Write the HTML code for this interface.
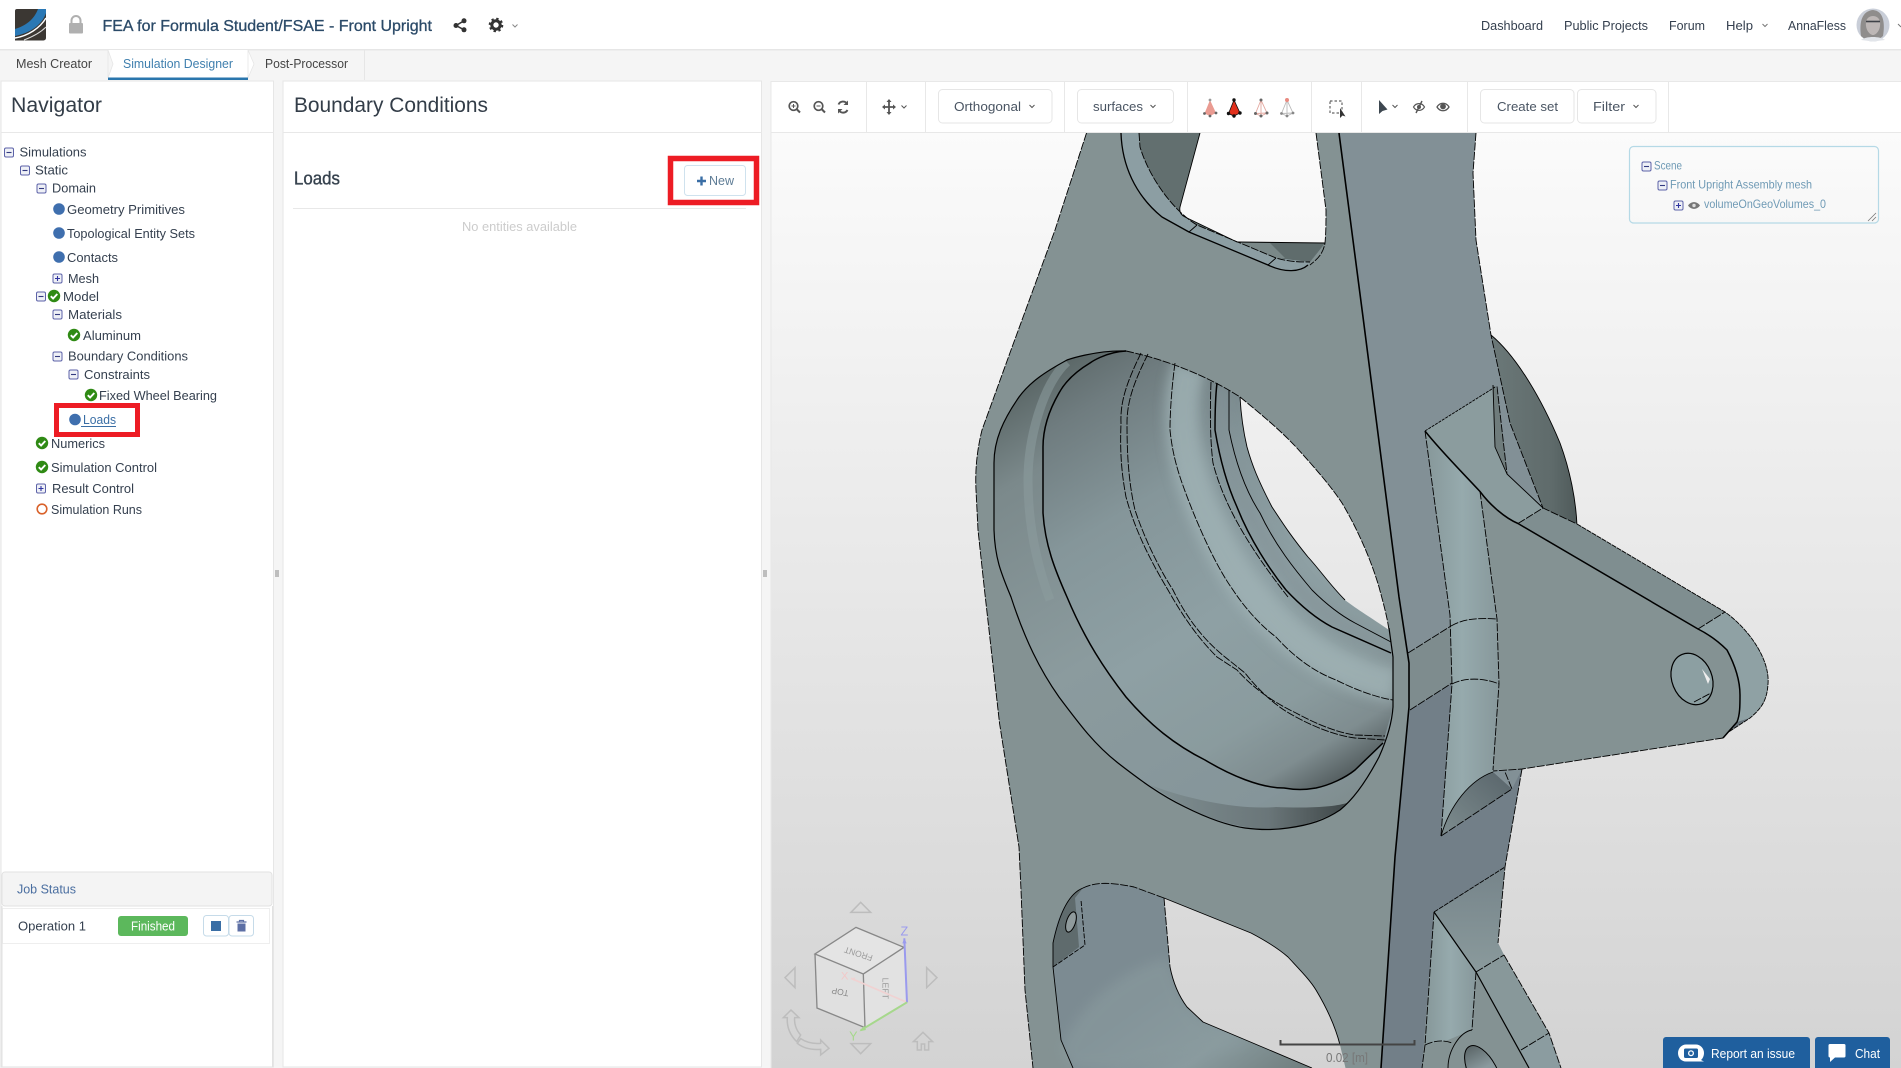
<!DOCTYPE html>
<html lang="en">
<head>
<meta charset="utf-8">
<title>FEA for Formula Student/FSAE - Front Upright</title>
<style>
html,body{margin:0;padding:0;background:#f5f5f5;width:1901px;height:1068px;overflow:hidden}
svg{display:block}
text{font-family:"Liberation Sans",sans-serif;font-size:13px;fill:#35404f}
.m{fill:none;stroke:#000;stroke-width:.9;stroke-linejoin:round}
.d{stroke-dasharray:8 1.5}
.t{stroke-width:1.5}
.ic{fill:none;stroke:#555;stroke-width:1.4}
.sep{stroke:#e8e8e8;stroke-width:1}
.btn{fill:#fff;stroke:#e6e6e6;stroke-width:1}
</style>
</head>
<body>
<svg width="1901" height="1068" viewBox="0 0 1901 1068" xmlns="http://www.w3.org/2000/svg">
<defs>
<linearGradient id="bg" gradientUnits="userSpaceOnUse" x1="0" y1="133" x2="0" y2="1068"><stop offset="0" stop-color="#fbfbfb"/><stop offset="1" stop-color="#d3d3d3"/></linearGradient>
<linearGradient id="rim" gradientUnits="userSpaceOnUse" x1="1060" y1="360" x2="1340" y2="830"><stop offset="0" stop-color="#5a6666"/><stop offset=".15" stop-color="#7b898b"/><stop offset=".5" stop-color="#8b9b9e"/><stop offset=".88" stop-color="#85959a"/><stop offset="1" stop-color="#7d8a8a"/></linearGradient>
<linearGradient id="cres" gradientUnits="userSpaceOnUse" x1="1150" y1="0" x2="1347" y2="0"><stop offset="0" stop-color="#7f8e91"/><stop offset=".6" stop-color="#6a7679"/><stop offset="1" stop-color="#3f4748"/></linearGradient>
<linearGradient id="inn" gradientUnits="userSpaceOnUse" x1="1060" y1="360" x2="1340" y2="830"><stop offset="0" stop-color="#5e6a6b"/><stop offset=".1" stop-color="#6f7c7f"/><stop offset=".3" stop-color="#85969a"/><stop offset=".55" stop-color="#8ea0a4"/><stop offset=".75" stop-color="#8a9b9e"/><stop offset=".85" stop-color="#7f8d90"/><stop offset=".92" stop-color="#566062"/><stop offset="1" stop-color="#2a2f30"/></linearGradient>
<linearGradient id="disk" x1="0" y1="0" x2="1" y2="0"><stop offset="0" stop-color="#6b7878"/><stop offset=".7" stop-color="#5f6b6b"/><stop offset="1" stop-color="#4f5a5a"/></linearGradient>
<linearGradient id="rib" x1="0" y1="0" x2="1" y2="0"><stop offset="0" stop-color="#869799"/><stop offset=".5" stop-color="#96aaad"/><stop offset="1" stop-color="#87989b"/></linearGradient>
<linearGradient id="leaf" x1="0" y1="1" x2="1" y2="0"><stop offset="0" stop-color="#7e8d8f"/><stop offset="1" stop-color="#58646a"/></linearGradient>
<linearGradient id="low" x1="0" y1="0" x2="1" y2="1"><stop offset="0" stop-color="#7c8b92"/><stop offset=".5" stop-color="#7c8b92"/><stop offset=".75" stop-color="#8a9b9f"/><stop offset="1" stop-color="#6f7d7d"/></linearGradient>
<linearGradient id="hol" x1="0" y1="0" x2="0" y2="1"><stop offset="0" stop-color="#5b6668"/><stop offset=".45" stop-color="#8a9a9e"/><stop offset="1" stop-color="#8f9fa3"/></linearGradient>
<linearGradient id="lrib" x1="0" y1="0" x2="0" y2="1"><stop offset="0" stop-color="#76848a"/><stop offset="1" stop-color="#8a9a9c"/></linearGradient>
<filter id="bl" x="-20%" y="-20%" width="140%" height="140%"><feGaussianBlur stdDeviation="6"/></filter>
<clipPath id="vp"><rect x="771" y="133" width="1130" height="935"/></clipPath>
<clipPath id="cinner"><path d="M1126 351 C1105 352 1090 363 1090 363 C1075 372 1065 382 1059 393 C1048 412 1043 430 1043 447 L1043 513 C1045 545 1055 570 1067 597 C1085 640 1105 670 1126 697 C1150 725 1175 745 1205 760 C1230 775 1260 788 1284 788 C1295 790 1305 790 1316 788 C1330 785 1345 778 1355 770 L1383 743 L1393 707 L1393 657 L1389 628 L1240 397 C1217 382 1177 362 1126 351 Z"/></clipPath>
<symbol id="mi" viewBox="0 0 11 11"><rect x="1" y="1" width="9" height="9" rx="1.5" fill="#eef0f6" stroke="#5c62a8"/><path d="M3 5.5H8" stroke="#333a80" stroke-width="1.1"/></symbol>
<symbol id="pl" viewBox="0 0 11 11"><rect x="1" y="1" width="9" height="9" rx="1.5" fill="#eef0f6" stroke="#5c62a8"/><path d="M3 5.5H8M5.5 3V8" stroke="#2f34a0" stroke-width="1.1"/></symbol>
<symbol id="ok" viewBox="0 0 14 14"><circle cx="7" cy="7" r="6.2" fill="#2f8a14"/><path d="M3.8 7.2L6.1 9.5L10.3 5" fill="none" stroke="#fff" stroke-width="1.9"/></symbol>
</defs>

<!-- page background -->
<rect width="1901" height="1068" fill="#f5f5f5"/>

<!-- header -->
<rect width="1901" height="49" fill="#fff"/>
<rect y="49" width="1901" height="1.5" fill="#e6e6e6"/>
<path d="M17 9H46V38a2.5 2.5 0 0 1-2.5 2.5H15V11a2 2 0 0 1 2-2Z" fill="#3b3733"/>
<path d="M38 9C34 20 25 26 15 29V36C30 33 42 25 46 13V9Z" fill="#2a78b5"/>
<path d="M46 18C40 28 28 36 15 38" fill="none" stroke="#fff" stroke-width="1.4"/>
<path d="M46 27C40 33 32 37 24 40" fill="none" stroke="#ddd" stroke-width="1"/>
<rect x="69" y="23" width="14" height="10.5" rx="1" fill="#b0b0b0"/>
<path d="M71.5 23V20.5a4.5 4.5 0 0 1 9 0V23" fill="none" stroke="#b0b0b0" stroke-width="2"/>
<text x="102.500" y="31" textLength="329.500" lengthAdjust="spacingAndGlyphs" style="font-size:16px;fill:#2b4a68;stroke:#2b4a68;stroke-width:.3">FEA for Formula Student/FSAE - Front Upright</text>
<circle cx="456" cy="25.500" r="2.500" fill="#333"/><circle cx="464" cy="20.800" r="2.500" fill="#333"/><circle cx="464" cy="29.800" r="2.500" fill="#333"/>
<path d="M456 25.500L464 20.800M456 25.500L464 29.800" stroke="#333" stroke-width="1.500"/>
<circle cx="496" cy="25" r="4.200" fill="none" stroke="#333" stroke-width="3"/>
<circle cx="496" cy="25" r="6.300" fill="none" stroke="#333" stroke-width="2" stroke-dasharray="2.400 2.550"/>
<path d="M512.500 24.500L515 27L517.500 24.500" fill="none" stroke="#888" stroke-width="1"/>

<text x="1481" y="30" textLength="62" lengthAdjust="spacingAndGlyphs">Dashboard</text>
<text x="1564" y="30" textLength="84" lengthAdjust="spacingAndGlyphs">Public Projects</text>
<text x="1669" y="30" textLength="36" lengthAdjust="spacingAndGlyphs">Forum</text>
<text x="1726" y="30" textLength="27" lengthAdjust="spacingAndGlyphs">Help</text>
<path d="M1762.500 24L1765 26.500L1767.500 24" fill="none" stroke="#777" stroke-width="1"/>
<text x="1788" y="30" textLength="58" lengthAdjust="spacingAndGlyphs">AnnaFless</text>
<circle cx="1873" cy="25" r="16.500" fill="#c9ced8"/>
<path d="M1861 36C1859 22 1862 11 1873 10C1884 11 1885 24 1883 36L1878 40H1866Z" fill="#8f8d8c"/>
<path d="M1866 22C1867 14 1879 14 1880 22C1881 30 1876 35 1873 35C1870 35 1865 30 1866 22Z" fill="#bdb7b6"/>
<path d="M1866 21.500H1880" stroke="#3f4248" stroke-width="1.600"/>
<path d="M1861 40C1866 36 1880 36 1885 40L1873 41.500Z" fill="#e2e5ea"/>
<path d="M1898 24L1901 27" stroke="#777" stroke-width="1"/>

<!-- tab bar -->
<rect y="50.500" width="1901" height="29.500" fill="#f5f5f5"/>
<rect x="364" y="50" width="1" height="30" fill="#e6e6e6"/>
<rect x="108" y="50" width="140" height="30" fill="#fff"/>
<path d="M108 50L113 64L108 78Z" fill="#f5f5f5" stroke="#e6e6e6" stroke-width=".8"/>
<path d="M248 50L254 64L248 78Z" fill="#fff" stroke="#e6e6e6" stroke-width=".8"/>
<rect x="108" y="77.500" width="140" height="2.500" fill="#2a76ad"/>
<text x="16" y="68" textLength="76" lengthAdjust="spacingAndGlyphs" style="fill:#444">Mesh Creator</text>
<text x="123" y="68" textLength="110" lengthAdjust="spacingAndGlyphs" style="fill:#3f7fae">Simulation Designer</text>
<text x="265" y="68" textLength="83" lengthAdjust="spacingAndGlyphs" style="fill:#444">Post-Processor</text>

<!-- navigator panel -->
<rect x="1" y="81" width="272.500" height="986" fill="#fff" stroke="#e6e6e6"/>
<path d="M1 132.500H273.500" stroke="#e8e8e8"/>
<text x="11" y="112" textLength="91" lengthAdjust="spacingAndGlyphs" style="font-size:21px;fill:#333d48">Navigator</text>

<use href="#mi" x="3.500" y="147" width="11" height="11"/>
<text x="19.500" y="156.500" textLength="67" lengthAdjust="spacingAndGlyphs">Simulations</text>
<use href="#mi" x="19.500" y="165" width="11" height="11"/>
<text x="35" y="174.500" textLength="33" lengthAdjust="spacingAndGlyphs">Static</text>
<use href="#mi" x="36" y="183" width="11" height="11"/>
<text x="52" y="192.500" textLength="44" lengthAdjust="spacingAndGlyphs">Domain</text>
<circle cx="59" cy="209" r="5.800" fill="#3f6fae"/>
<text x="67" y="214" textLength="118" lengthAdjust="spacingAndGlyphs">Geometry Primitives</text>
<circle cx="59" cy="233" r="5.800" fill="#3f6fae"/>
<text x="67" y="238" textLength="128" lengthAdjust="spacingAndGlyphs">Topological Entity Sets</text>
<circle cx="59" cy="257" r="5.800" fill="#3f6fae"/>
<text x="67" y="262" textLength="51" lengthAdjust="spacingAndGlyphs">Contacts</text>
<use href="#pl" x="52" y="273" width="11" height="11"/>
<text x="68" y="283" textLength="31" lengthAdjust="spacingAndGlyphs">Mesh</text>
<use href="#mi" x="35.500" y="291" width="11" height="11"/>
<use href="#ok" x="47" y="289" width="14" height="14"/>
<text x="63" y="301" textLength="36" lengthAdjust="spacingAndGlyphs">Model</text>
<use href="#mi" x="52" y="309" width="11" height="11"/>
<text x="68" y="319" textLength="54" lengthAdjust="spacingAndGlyphs">Materials</text>
<use href="#ok" x="67" y="328" width="14" height="14"/>
<text x="83" y="340" textLength="58" lengthAdjust="spacingAndGlyphs">Aluminum</text>
<use href="#mi" x="52" y="351" width="11" height="11"/>
<text x="68" y="360.500" textLength="120" lengthAdjust="spacingAndGlyphs">Boundary Conditions</text>
<use href="#mi" x="68" y="369" width="11" height="11"/>
<text x="84" y="379" textLength="66" lengthAdjust="spacingAndGlyphs">Constraints</text>
<use href="#ok" x="84" y="388" width="14" height="14"/>
<text x="99" y="400" textLength="118" lengthAdjust="spacingAndGlyphs">Fixed Wheel Bearing</text>
<circle cx="75" cy="419.500" r="5.800" fill="#3f6fae"/>
<text x="83" y="424" textLength="33" lengthAdjust="spacingAndGlyphs" style="fill:#3a6ea5">Loads</text>
<rect x="81" y="426" width="35" height="1" fill="#3a6ea5"/>
<rect x="56.500" y="405.500" width="81" height="29" fill="none" stroke="#ed1c24" stroke-width="5"/>
<use href="#ok" x="35" y="436" width="14" height="14"/>
<text x="51" y="448" textLength="54" lengthAdjust="spacingAndGlyphs">Numerics</text>
<use href="#ok" x="35" y="460" width="14" height="14"/>
<text x="51" y="472" textLength="106" lengthAdjust="spacingAndGlyphs">Simulation Control</text>
<use href="#pl" x="35.500" y="483" width="11" height="11"/>
<text x="52" y="493" textLength="82" lengthAdjust="spacingAndGlyphs">Result Control</text>
<circle cx="42" cy="509" r="4.800" fill="none" stroke="#d9622b" stroke-width="1.600"/>
<text x="51" y="514" textLength="91" lengthAdjust="spacingAndGlyphs">Simulation Runs</text>

<!-- job status -->
<rect x="2" y="872" width="270" height="34" rx="3" fill="#f4f4f4" stroke="#e2e2e2"/>
<text x="17" y="893.500" textLength="59" lengthAdjust="spacingAndGlyphs" style="fill:#4a6ea0">Job Status</text>
<rect x="2.500" y="908.500" width="267" height="35" fill="#fff" stroke="#eee"/>
<path d="M272.500 906V1067H2V906" fill="none" stroke="#e2e2e2"/>
<text x="18" y="930.500" textLength="68" lengthAdjust="spacingAndGlyphs">Operation 1</text>
<rect x="118" y="916" width="70" height="20" rx="3" fill="#5cb85c"/>
<text x="131" y="930.500" textLength="44" lengthAdjust="spacingAndGlyphs" style="fill:#fff;font-size:12.500px">Finished</text>
<rect x="203.500" y="915.500" width="25" height="20.500" rx="3" fill="#fff" stroke="#c6dbe9"/>
<rect x="229" y="915.500" width="24.500" height="20.500" rx="3" fill="#fff" stroke="#c6dbe9"/>
<rect x="211" y="921" width="10" height="10" fill="#3a6ea5"/>
<path d="M237.500 923.500H245.500V931.500H237.500Z" fill="#5d6fa5"/><path d="M236.500 922H246.500M239.500 922V920.500H243.500V922" fill="none" stroke="#5d6fa5" stroke-width="1.200"/>

<!-- boundary conditions panel -->
<rect x="283" y="81" width="478.500" height="986" fill="#fff" stroke="#e6e6e6"/>
<path d="M283 132.500H761.500" stroke="#e8e8e8"/>
<text x="294" y="112" textLength="194" lengthAdjust="spacingAndGlyphs" style="font-size:21px;fill:#333d48">Boundary Conditions</text>
<text x="294" y="184.500" textLength="46" lengthAdjust="spacingAndGlyphs" style="font-size:18px;fill:#36424e;stroke:#36424e;stroke-width:.35">Loads</text>
<path d="M293 208.500H746" stroke="#e8e8e8"/>
<text x="462" y="231" textLength="115" lengthAdjust="spacingAndGlyphs" style="fill:#ccc">No entities available</text>
<rect x="670.500" y="158.500" width="86" height="44" fill="none" stroke="#ed1c24" stroke-width="5.500"/>
<rect x="684.500" y="165.500" width="61" height="30" rx="3" fill="#fff" stroke="#cfe2ee"/>
<path d="M697 181H706M701.500 176.500V185.500" stroke="#3a6ea5" stroke-width="2.400"/>
<text x="709" y="185" textLength="25" lengthAdjust="spacingAndGlyphs" style="fill:#5e7c95">New</text>

<!-- splitter handles -->
<path d="M276 570V577M278 570V577M764 570V577M766 570V577" stroke="#888" stroke-width="1"/>

<!-- toolbar -->
<rect x="771" y="81" width="1130" height="52" fill="#fff"/>
<path d="M771 81.500H1901M771 132.500H1901M771 81V1068" stroke="#e8e8e8"/>
<path class="sep" d="M866.500 82V132M925.500 82V132M1064.500 82V132M1187.500 82V132M1311.500 82V132M1361.500 82V132M1467.500 82V132M1668.500 82V132"/>
<circle cx="793.500" cy="106" r="4.300" class="ic" style="stroke-width:1.700"/><path d="M796.500 109L800 112.500" class="ic" style="stroke-width:2"/><path d="M791.500 106H795.500M793.500 104V108" class="ic" style="stroke-width:1"/>
<circle cx="818.500" cy="106" r="4.300" class="ic" style="stroke-width:1.700"/><path d="M821.500 109L825 112.500" class="ic" style="stroke-width:2"/><path d="M816.500 106H820.500" class="ic" style="stroke-width:1"/>
<path d="M838.500 104.500A5 5 0 0 1 847 103.500M847.500 110A5 5 0 0 1 839 110.500" class="ic" style="stroke-width:1.900"/><path d="M848 100.500V105H843.500ZM838 113.500V109H842.500Z" fill="#555"/>
<path d="M889 100V114M883 107H895" class="ic" style="stroke-width:1.800"/><path d="M889 99L886.500 102H891.500ZM889 115L886.500 112H891.500ZM882 107L885 104.500V109.500ZM896 107L893 104.500V109.500Z" fill="#555"/>
<path d="M901.500 105.500L904 108L906.500 105.500" class="ic" style="stroke-width:1"/>
<rect x="938.500" y="89.500" width="113.500" height="33.500" rx="4" class="btn"/>
<text x="954" y="111" textLength="67" lengthAdjust="spacingAndGlyphs" style="fill:#4a5563">Orthogonal</text>
<path d="M1029.500 105L1032 107.500L1034.500 105" class="ic" style="stroke-width:1"/>
<rect x="1077.500" y="89.500" width="96" height="33.500" rx="4" class="btn"/>
<text x="1093" y="111" textLength="50" lengthAdjust="spacingAndGlyphs" style="fill:#4a5563">surfaces</text>
<path d="M1150.500 105L1153 107.500L1155.500 105" class="ic" style="stroke-width:1"/>
<!-- view mode cones -->
<path d="M1210 100L1204.500 113.500L1210 116L1216 113Z" fill="#ea9b92"/><circle cx="1204.500" cy="113.500" r="1.400" fill="#666"/><circle cx="1216" cy="113" r="1.400" fill="#666"/><circle cx="1210" cy="116" r="1.400" fill="#666"/><circle cx="1210" cy="100" r="1.400" fill="#999"/>
<path d="M1234 100L1228.500 113.500L1234 116L1240 113Z" fill="#e2301c" stroke="#111" stroke-width=".8"/><circle cx="1228.500" cy="113.500" r="1.700" fill="#111"/><circle cx="1240" cy="113" r="1.700" fill="#111"/><circle cx="1234" cy="116" r="1.700" fill="#111"/><circle cx="1234" cy="100" r="1.700" fill="#111"/>
<path d="M1261 100L1255.500 113.500L1261 116L1267 113ZM1261 100V116M1255.500 113.500L1267 113" fill="none" stroke="#e4a8a0" stroke-width=".9"/><circle cx="1255.500" cy="113.500" r="1.500" fill="#666"/><circle cx="1267" cy="113" r="1.500" fill="#666"/><circle cx="1261" cy="116" r="1.500" fill="#666"/><circle cx="1261" cy="100" r="1.500" fill="#666"/>
<path d="M1287 100L1281.500 113.500L1287 116L1293 113ZM1287 100V116M1281.500 113.500L1293 113" fill="none" stroke="#bbb" stroke-width=".9"/><circle cx="1281.500" cy="113.500" r="1.400" fill="#888"/><circle cx="1293" cy="113" r="1.400" fill="#888"/><circle cx="1287" cy="116" r="1.400" fill="#888"/><circle cx="1287" cy="100" r="2" fill="#e98a80"/>
<rect x="1330" y="101" width="12" height="12" fill="none" stroke="#666" stroke-width="1.200" stroke-dasharray="2.500 2"/>
<path d="M1340 108L1340 118L1342.500 115.500L1345.500 116.500Z" fill="#333"/>
<path d="M1379 100L1379 114L1382.500 111L1387.500 109.500Z" fill="#3d4750"/>
<path d="M1392.500 105L1395 107.500L1397.500 105" class="ic" style="stroke-width:1"/>
<path d="M1413.500 107C1416 102.500 1422 102.500 1424.500 107C1422 111.500 1416 111.500 1413.500 107Z" class="ic" style="stroke-width:1.200"/><path d="M1422 101L1416 113" stroke="#555" stroke-width="1.400"/><circle cx="1419" cy="107" r="2" fill="#555"/>
<path d="M1437 107C1440 102 1446 102 1449 107C1446 112 1440 112 1437 107Z" fill="#fff" stroke="#555" stroke-width="1.300"/><circle cx="1443" cy="106.500" r="2.900" fill="#555"/>
<rect x="1480.500" y="89.500" width="93.500" height="33.500" rx="4" class="btn"/>
<text x="1497" y="111" textLength="61" lengthAdjust="spacingAndGlyphs" style="fill:#4a5563">Create set</text>
<rect x="1577.500" y="89.500" width="78.500" height="33.500" rx="4" class="btn"/>
<text x="1593" y="111" textLength="32" lengthAdjust="spacingAndGlyphs" style="fill:#4a5563">Filter</text>
<path d="M1633.500 105L1636 107.500L1638.500 105" class="ic" style="stroke-width:1"/>

<!-- viewport -->
<rect x="771.500" y="133" width="1129.500" height="935" fill="url(#bg)"/>
<g clip-path="url(#vp)">
<!-- back disk -->
<path d="M1491 335C1515 355 1540 395 1560 443C1570 470 1576 500 1577 526L1543 508L1510 423Z" fill="url(#disk)"/>
<path class="m" d="M1491 335C1515 355 1540 395 1560 443C1570 470 1576 500 1577 526"/>
<!-- body silhouette -->
<path d="M1086.500 133L1055 230L1011 350L982 430C977 450 975 470 976 490L978 530L984.500 590L999.500 723L1019 847L1021 890L1025 990L1033 1068H1561L1549 1033L1504 955L1498 943L1495 923L1505 867L1522 769L1493 770L1480 491L1543 508L1510 423L1491 335L1476 240L1473 173L1476 133Z" fill="#849293"/>
<!-- right strip -->
<path d="M1339 133H1476L1473 173L1476 240L1491 335L1510 423L1543 508L1518 523L1480 491L1497 619L1499 770L1522 769L1505 867L1434 912L1422 1068H1381L1395 857L1409 707V663L1399 597L1363 317Z" fill="#829096"/>
<path d="M1410 710L1452 683L1441 836L1512 789L1522 769L1505 867L1434 912L1422 1068H1381L1395 857Z" fill="#727f88"/>
<path d="M1408 653L1451 626L1452 683L1410 710Z" fill="#7e8c8e"/>

<!-- lower pocket -->
<path d="M1053 943C1055 925 1060 912 1069 900C1076 892 1083 888 1083 888C1095 882 1110 882 1134 887L1164 898L1170 967C1174 985 1180 998 1187 1007L1203 1022L1312 1068H1073L1061 1040L1053 967Z" fill="url(#low)"/>
<path d="M1060 1050C1080 1000 1130 965 1170 958C1176 990 1190 1010 1203 1022L1250 1045L1120 1068H1070Z" fill="#8a9b9f" opacity=".6" filter="url(#bl)"/>
<path d="M1053 967L1079 947L1075 898L1083 888C1070 893 1060 910 1053 943Z" fill="#5f6b6d"/>
<ellipse cx="1071" cy="922" rx="4.500" ry="10.500" transform="rotate(18 1071 922)" fill="#8f9a9c" stroke="#000"/>

<!-- bore -->
<path d="M1126 351C1095 350 1067 360 1067 360C1045 372 1030 382 1019 397C1003 420 994 440 994 463V530C995 560 1002 575 1011 597C1025 640 1040 670 1059 697C1080 725 1095 745 1118 763C1140 780 1160 795 1185 807C1205 817 1225 825 1245 828C1260 830 1275 830 1288 828C1310 825 1325 820 1340 810C1355 798 1368 778 1379 757C1388 737 1392 722 1393 707V657L1389 628L1240 397C1217 382 1177 362 1126 351Z" fill="url(#rim)"/>
<path d="M1067 362C1042 385 1028 440 1028 480C1028 520 1035 560 1050 600" fill="none" stroke="#8c9d9f" stroke-width="9" opacity=".55"/>
<path d="M1150 785C1190 800 1240 810 1276 807C1300 808 1330 808 1347 803C1340 812 1320 822 1288 828C1260 831 1230 828 1185 807Z" fill="url(#cres)"/>
<path d="M1126 351C1105 352 1090 363 1090 363C1075 372 1065 382 1059 393C1048 412 1043 430 1043 447V513C1045 545 1055 570 1067 597C1085 640 1105 670 1126 697C1150 725 1175 745 1205 760C1230 775 1260 788 1284 788C1295 790 1305 790 1316 788C1330 785 1345 778 1355 770L1383 743L1393 707V657L1389 628L1240 397C1217 382 1177 362 1126 351Z" fill="url(#inn)"/>
<g clip-path="url(#cinner)">
<path d="M1190 365C1178 400 1178 450 1205 513C1225 560 1250 600 1290 635C1320 660 1360 680 1395 685" fill="none" stroke="#a0b3b6" stroke-width="34" filter="url(#bl)" opacity=".8"/>
<path d="M1222 385C1215 450 1250 530 1300 590C1335 625 1370 640 1395 650" fill="none" stroke="#849398" stroke-width="14" filter="url(#bl)" opacity=".7"/>
</g>

<!-- through hole -->
<path d="M1240 397C1262 415 1280 430 1296 447C1315 468 1330 485 1342 503C1358 530 1371 560 1379 587C1383 602 1387 616 1389 630C1370 617 1358 610 1345 600C1330 585 1320 570 1308 557C1290 535 1282 522 1272 507C1258 480 1252 465 1247 447C1243 430 1241 415 1240 397Z" fill="url(#bg)"/>
<!-- top hole -->
<path d="M1139 133L1140 147C1150 180 1175 212 1197 225L1276 258L1310 262L1325 243L1237 242L1185 217L1180 207L1200 133Z" fill="#626f6f"/>
<path d="M1237 242L1325 243L1310 262L1276 258Z" fill="#5f6c6c"/>
<path d="M1237 242L1270 243L1285 258L1276 258Z" fill="#7a8888"/>
<path d="M1200 133L1180 207C1179 212 1181 215 1185 217L1237 242L1325 243C1326 232 1326 222 1326 210L1316 133Z" fill="url(#bg)"/>
<path d="M1121 133C1122 165 1135 195 1162 217L1189 232L1268 265C1285 273 1300 272 1308 265L1322 245L1310 262L1276 258L1197 225C1175 212 1150 180 1140 147L1139 133Z" fill="#8c9ea3"/>
<!-- bottom hole -->
<path d="M1164 898L1251 933C1270 943 1280 950 1288 957C1300 970 1310 980 1316 990C1325 1005 1335 1025 1340 1045L1345.500 1068H1312L1203 1022C1195 1015 1191 1012 1187 1007C1178 995 1173 982 1170 967Z" fill="url(#bg)"/>

<!-- upper rib -->
<path d="M1425 431L1496 386.500L1507 474L1543 508L1518 523.500C1505 518 1490 505 1480 491.500Z" fill="#8b9c9e"/>
<path d="M1493 385L1495 447L1507 474L1497 390Z" fill="#6f7c7c"/>
<path d="M1425 431L1480 491.500L1497 619L1499 684L1493 772C1470 780 1450 805 1441 836L1452 684L1450 615Z" fill="url(#rib)"/>
<path d="M1493 772L1512 789L1441 836C1450 805 1470 780 1493 772Z" fill="url(#leaf)"/>
<!-- lever face and end -->
<path d="M1480 491.500C1490 505 1505 518 1518 523.500L1698 629C1712 636 1722 645 1727 650C1735 665 1740 680 1740 695C1740 705 1740 715 1737 722L1723 738L1522 769L1493 770L1499 684L1497 619Z" fill="#849293"/>
<path d="M1543 508L1577 524L1725 612L1698 629L1518 523.500Z" fill="#7f8e90"/>
<path d="M1698 629L1725 612C1750 630 1770 660 1768 684C1767 700 1762 708 1750 718L1727 733L1737 722C1740 715 1740 705 1740 695C1740 680 1735 665 1727 650C1722 645 1712 636 1698 629Z" fill="#8fa1a4"/>
<path d="M1737 722L1750 718L1727 733L1723 738Z" fill="#66727a"/>
<ellipse cx="1692" cy="679" rx="20" ry="26.500" transform="rotate(-22 1692 679)" fill="#8c9fa2" stroke="#000" stroke-width="1.200"/>
<path d="M1702 669L1710 679L1708 684Z" fill="#eee"/>
<path d="M1694 702L1711 693" class="m d"/>

<!-- lower rib & arm -->
<path d="M1434 912L1505 867L1498 943L1504 955L1476 972Z" fill="url(#lrib)"/>
<path d="M1476 972L1529 1068H1422L1425 1045L1448 1040L1472 1030Z" fill="#849293"/>
<path d="M1434 912L1476 972L1472 1030L1448 1040L1425 1045Z" fill="url(#rib)"/>
<path d="M1476 972L1504 955L1549 1033L1561 1068H1529Z" fill="#88989a"/>
<path d="M1521 1050L1549 1033L1561 1068H1529Z" fill="#8b9ca0"/>
<ellipse cx="1483" cy="1072" rx="14" ry="29" transform="rotate(-28 1483 1072)" fill="url(#hol)" stroke="#000"/>

<!-- feature lines -->
<path class="m d" d="M1086.500 133L1055 230L1011 350L982 430C977 450 975 470 976 490L978 530L984.500 590L999.500 723L1019 847L1021 890L1025 990L1033 1068"/>
<path class="m d" d="M1476 133L1473 173L1476 240L1491 335L1510 423L1543 508"/>
<path class="m" d="M1339 133L1363 317L1399 597L1409 663V707L1395 857L1381 1068" style="stroke-width:1.600"/>
<path class="m d" d="M1316 133L1326 210C1326 222 1326 232 1325 243C1323 255 1316 260 1310 265"/>
<path class="m" d="M1121 133C1122 165 1135 195 1162 217L1189 232L1268 265C1285 273 1300 272 1308 265" style="stroke-width:1.300"/>
<path class="m d" d="M1139 133L1140 147C1150 180 1175 212 1197 225L1276 258C1290 262 1300 262 1310 262"/>
<path class="m" d="M1200 133L1180 207C1179 212 1181 215 1185 217L1237 242L1325 243"/>
<path class="m" d="M1189 232L1197 225M1268 265L1276 258"/>
<path class="m" d="M1126 351C1095 350 1067 360 1067 360C1045 372 1030 382 1019 397C1003 420 994 440 994 463V530C995 560 1002 575 1011 597C1025 640 1040 670 1059 697C1080 725 1095 745 1118 763C1140 780 1160 795 1185 807C1205 817 1225 825 1245 828C1260 830 1275 830 1288 828C1310 825 1325 820 1340 810C1355 798 1368 778 1379 757C1388 737 1392 722 1393 707V657L1389 628" style="stroke-width:1.200"/>
<path class="m t" d="M1126 351C1105 352 1090 363 1090 363C1075 372 1065 382 1059 393C1048 412 1043 430 1043 447V513C1045 545 1055 570 1067 597C1085 640 1105 670 1126 697C1150 725 1175 745 1205 760C1230 775 1260 788 1284 788C1295 790 1305 790 1316 788C1330 785 1345 778 1355 770L1383 743"/>
<path class="m d" d="M1126 351C1177 362 1217 382 1240 397C1262 415 1280 430 1296 447C1315 468 1330 485 1342 503C1358 530 1371 560 1379 587C1383 602 1387 616 1389 630"/>
<path class="m" d="M1240 397C1241 415 1243 430 1247 447C1252 465 1258 480 1272 507C1282 522 1290 535 1308 557C1320 570 1330 585 1345 600"/>
<path class="m d" d="M1141 353C1128 380 1120 400 1121 423C1120 450 1121 470 1126 497C1135 530 1150 560 1168 590C1185 620 1200 640 1217 657L1237 670C1255 690 1275 703 1296 713C1320 726 1340 733 1355 735L1385 736"/>
<path class="m d" d="M1148 354C1135 380 1127 400 1127 423C1127 450 1128 480 1135 510C1145 540 1160 570 1173 590C1190 625 1210 645 1225 657L1245 673C1260 692 1278 708 1296 717C1320 730 1340 736 1355 738L1385 740"/>
<path class="m d" d="M1175 363C1172 385 1170 410 1170 430C1172 450 1176 465 1181 480C1195 520 1215 565 1233 590C1245 608 1260 625 1276 637C1295 658 1315 672 1336 680C1360 692 1380 698 1393 700"/>
<path class="m t" d="M1217 383C1215 400 1215 415 1215 430C1220 460 1227 485 1237 507C1250 540 1270 570 1286 590C1300 605 1315 618 1332 627L1391 653"/>
<path class="m d" d="M1211 382C1210 410 1210 440 1213 463C1225 510 1255 555 1288 597"/>
<path class="m" d="M1229 390C1229 405 1229 420 1229 430C1235 460 1245 490 1260 513C1275 545 1295 570 1312 590C1325 603 1340 615 1355 623L1391 642"/>
<!-- lower pocket lines -->
<path class="m d" d="M1083 888C1095 882 1110 882 1134 887L1164 898"/>
<path class="m" d="M1164 898L1251 933C1270 943 1280 950 1288 957C1300 970 1310 980 1316 990C1325 1005 1335 1025 1340 1045"/>
<path class="m d" d="M1164 898L1170 967"/>
<path class="m" d="M1170 967C1173 982 1178 995 1187 1007L1203 1022L1312 1068"/>
<path class="m" d="M1083 888C1070 893 1060 910 1053 943V967L1061 1040L1073 1068"/>
<path class="m" d="M1053 967L1085 945L1081 900" style="stroke-dasharray:5 1.500"/>
<!-- rib lines -->
<path class="m" d="M1425 431L1496 386.500" style="stroke-dasharray:3 1"/>
<path class="m d" d="M1425 431L1450 615L1452 684L1441 836"/>
<path class="m d" d="M1480 491.500L1497 619L1499 684L1493 770"/>
<path class="m t" d="M1425 431C1440 450 1460 470 1480 491.500C1490 505 1505 518 1518 523.500L1698 629C1712 636 1722 645 1727 650C1735 665 1740 680 1740 695C1740 705 1740 715 1737 722L1723 738"/>
<path class="m d" d="M1723 738L1522 769L1493 771"/>
<path class="m" d="M1493 385L1495 447L1507 474L1543 508"/>
<path class="m d" d="M1497 386.500L1507 474"/>
<path class="m d" d="M1518 523.500L1543 508L1577 524"/>
<path class="m" d="M1577 524L1725 612C1750 630 1770 660 1768 684C1767 700 1762 708 1750 718L1727 733" style="stroke-dasharray:5 .8"/>
<path class="m d" d="M1698 629L1725 612"/>
<path class="m d" d="M1408 653L1451 626M1410 710L1452 683"/>
<path class="m d" d="M1451 626C1465 618 1480 618 1497 619M1452 684C1465 677 1485 678 1499 684"/>
<path class="m" d="M1441 836C1450 805 1470 780 1493 772"/>
<path class="m d" d="M1441 836L1512 789L1505 772"/>
<path class="m d" d="M1522 769L1505 867L1498 943"/>
<!-- lower right lines -->
<path class="m" d="M1434 912L1505 867" style="stroke-dasharray:5 1"/>
<path class="m d" d="M1434 912L1425 1045L1422 1068"/>
<path class="m" d="M1434 912L1476 972L1529 1068" style="stroke-width:1.200"/>
<path class="m d" d="M1476 972L1472 1030"/>
<path class="m d" d="M1476 972L1504 955M1504 955L1549 1033L1561 1068M1521 1050L1549 1033"/>
<path class="m d" d="M1425 1045C1435 1040 1445 1040 1452 1043"/>
<path class="m" d="M1448 1068C1448 1050 1460 1032 1472 1030"/>

<!-- gizmo -->
<g transform="translate(770 880) scale(.3333)">
<path d="M135 222L258 142L402 202L280 282Z" fill="#e4e4e4"/>
<path d="M135 222L280 282L285 443L141 384Z" fill="#e0e0e0"/>
<path d="M280 282L402 202L411 367L285 443Z" fill="#e2e2e2"/>
<path d="M135 222L258 142L402 202L280 282ZM135 222L141 384L285 443L280 282M285 443L411 367" fill="none" stroke="#888" stroke-width="4"/>
<text x="0" y="0" transform="translate(268 213) rotate(198)" text-anchor="middle" textLength="88" lengthAdjust="spacingAndGlyphs" style="font-size:26px;fill:#999">FRONT</text>
<text x="0" y="0" transform="translate(212 327) rotate(190)" text-anchor="middle" textLength="52" lengthAdjust="spacingAndGlyphs" style="font-size:26px;fill:#888">TOP</text>
<text x="0" y="0" transform="translate(338 325) rotate(90)" text-anchor="middle" textLength="64" lengthAdjust="spacingAndGlyphs" style="font-size:24px;fill:#999">LEFT</text>
<path d="M411 367L243 295" stroke="#f0d2d2" stroke-width="5"/><path d="M243 295L256 292L252 303Z" fill="#f0d2d2"/>
<text x="224" y="298" text-anchor="middle" style="font-size:34px;fill:#f2c8c8">X</text>
<path d="M411 367L403 175" stroke="#9a9aee" stroke-width="6"/><path d="M403 174L397 190H410Z" fill="#9a9aee"/>
<text x="403" y="167" text-anchor="middle" style="font-size:38px;fill:#9a9aee">Z</text>
<path d="M411 367L272 451" stroke="#a6d88c" stroke-width="6"/><path d="M268 454L282 438L288 450Z" fill="#a6d88c"/>
<text x="250" y="482" text-anchor="middle" style="font-size:38px;fill:#a6d88c">Y</text>
<g fill="none" stroke="#bdbdbd" stroke-width="4.500">
<path d="M243 97L272 67L302 97Z"/><path d="M243 491H302L272 521Z"/><path d="M75 263V323L45 293Z"/><path d="M470 263V323L501 293Z"/>
<path d="M430 485L459 457L488 485H476V510H464V492H454V510H442V485Z"/>
<path d="M40 413L63 390L87 413H74C72 430 78 450 92 465L80 485C60 465 50 440 52 413Z"/>
<path d="M82 490L92 476C110 488 130 492 152 490V480L177 505L152 525V508C125 510 100 505 82 490Z"/>
</g>
</g>

<!-- scale -->
<path d="M1280.500 1040V1044.500H1414.500V1040" fill="none" stroke="#444" stroke-width="2"/>
<text x="1326" y="1062" textLength="42" lengthAdjust="spacingAndGlyphs" style="fill:#777;font-size:13px">0.02 [m]</text>

<!-- scene box -->
<rect x="1629.500" y="146.500" width="249" height="76.500" rx="4" fill="none" stroke="#b5d9e6" stroke-width="1.200"/>
<path d="M1868 221L1876 213M1872 221L1876 217" stroke="#777" stroke-width=".8"/>
<use href="#mi" x="1641" y="161" width="11" height="11"/>
<text x="1654" y="169.500" textLength="28" lengthAdjust="spacingAndGlyphs" style="fill:#6f9ab5;font-size:12px">Scene</text>
<use href="#mi" x="1657" y="180" width="11" height="11"/>
<text x="1670" y="188.500" textLength="142" lengthAdjust="spacingAndGlyphs" style="fill:#6f9ab5;font-size:12px">Front Upright Assembly mesh</text>
<use href="#pl" x="1673" y="200" width="11" height="11"/>
<path d="M1688 205.500C1691 201 1697 201 1700 205.500C1697 210 1691 210 1688 205.500Z" fill="#777"/><circle cx="1694" cy="205.500" r="1.700" fill="#ddd"/>
<text x="1704" y="208" textLength="122" lengthAdjust="spacingAndGlyphs" style="fill:#6f9ab5;font-size:12px">volumeOnGeoVolumes_0</text>

<!-- bottom buttons -->
<path d="M1663 1040a3 3 0 0 1 3-3H1807a3 3 0 0 1 3 3V1068H1663Z" fill="#1f5f9e"/>
<path d="M1815 1040a3 3 0 0 1 3-3H1887a3 3 0 0 1 3 3V1068H1815Z" fill="#1f5f9e"/>
<path d="M1690 1044.500H1696C1700 1044.500 1704 1048 1704 1053C1704 1056 1702.500 1059 1701 1060L1704 1061.500L1698 1061.500H1686C1681 1061.500 1678 1057.500 1678 1053C1678 1048 1682 1044.500 1686 1044.500Z" fill="#fff"/>
<rect x="1684" y="1048.500" width="14" height="9.500" rx="1.500" fill="#1f5f9e"/><circle cx="1691" cy="1053.200" r="3" fill="#fff"/><circle cx="1691" cy="1053.200" r="1.700" fill="#1f5f9e"/>
<text x="1711" y="1058" textLength="84" lengthAdjust="spacingAndGlyphs" style="fill:#fff;font-size:12.500px">Report an issue</text>
<path d="M1830 1044H1844a1.500 1.500 0 0 1 1.500 1.500V1056a1.500 1.500 0 0 1-1.500 1.500H1835L1830 1062V1057.500a1.500 1.500 0 0 1-1.500-1.500V1045.500a1.500 1.500 0 0 1 1.500-1.500Z" fill="#fff"/>
<text x="1855" y="1058" textLength="25" lengthAdjust="spacingAndGlyphs" style="fill:#fff;font-size:12.500px">Chat</text>
</g>
</svg>
</body>
</html>
